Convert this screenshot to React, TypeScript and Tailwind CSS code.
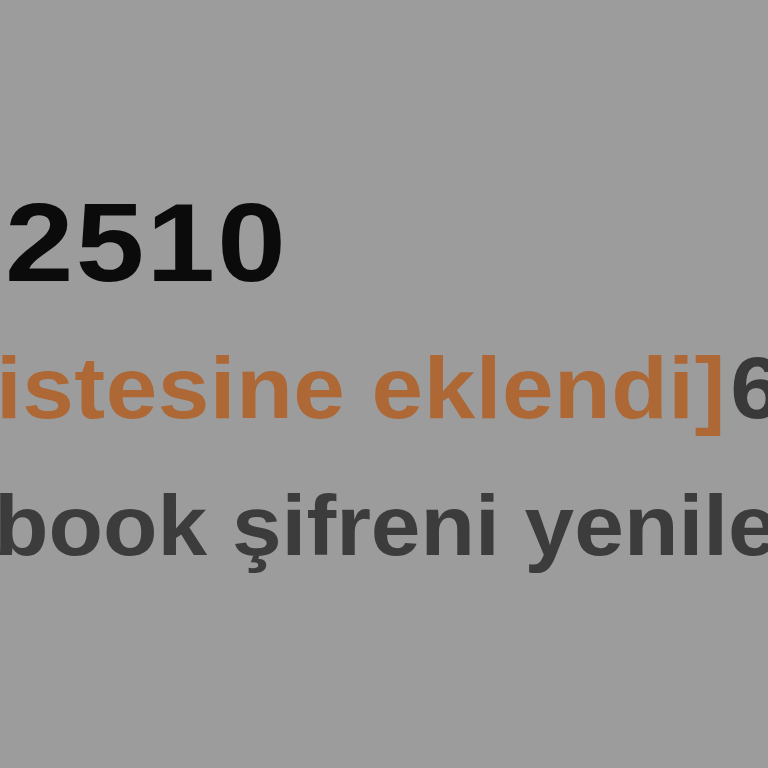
export default function App() {
  return (
    <div className="h-[768px] w-[768px] overflow-hidden bg-[#9c9c9c] font-['Liberation_Sans',Arial,sans-serif] font-bold">
      <div className="flex flex-col whitespace-nowrap pt-[187px]">
        <div className="ml-[5px] origin-left scale-x-[1.1] text-[112px] leading-none tracking-[2px] text-[#0b0b0b]">
          2510
        </div>
        <div className="-ml-[4px] mt-[45px] origin-left scale-x-[1.065] text-[87px] leading-none tracking-[0.5px] text-[#ad6836]">
          istesine eklendi]<span className="ml-[4px] text-[#393939]">6</span>
        </div>
        <div className="-ml-[6px] mt-[52px] origin-left scale-x-[1.05] text-[85px] leading-none text-[#3c3c3c]">
          book şifreni yenile
        </div>
      </div>
    </div>
  );
}
